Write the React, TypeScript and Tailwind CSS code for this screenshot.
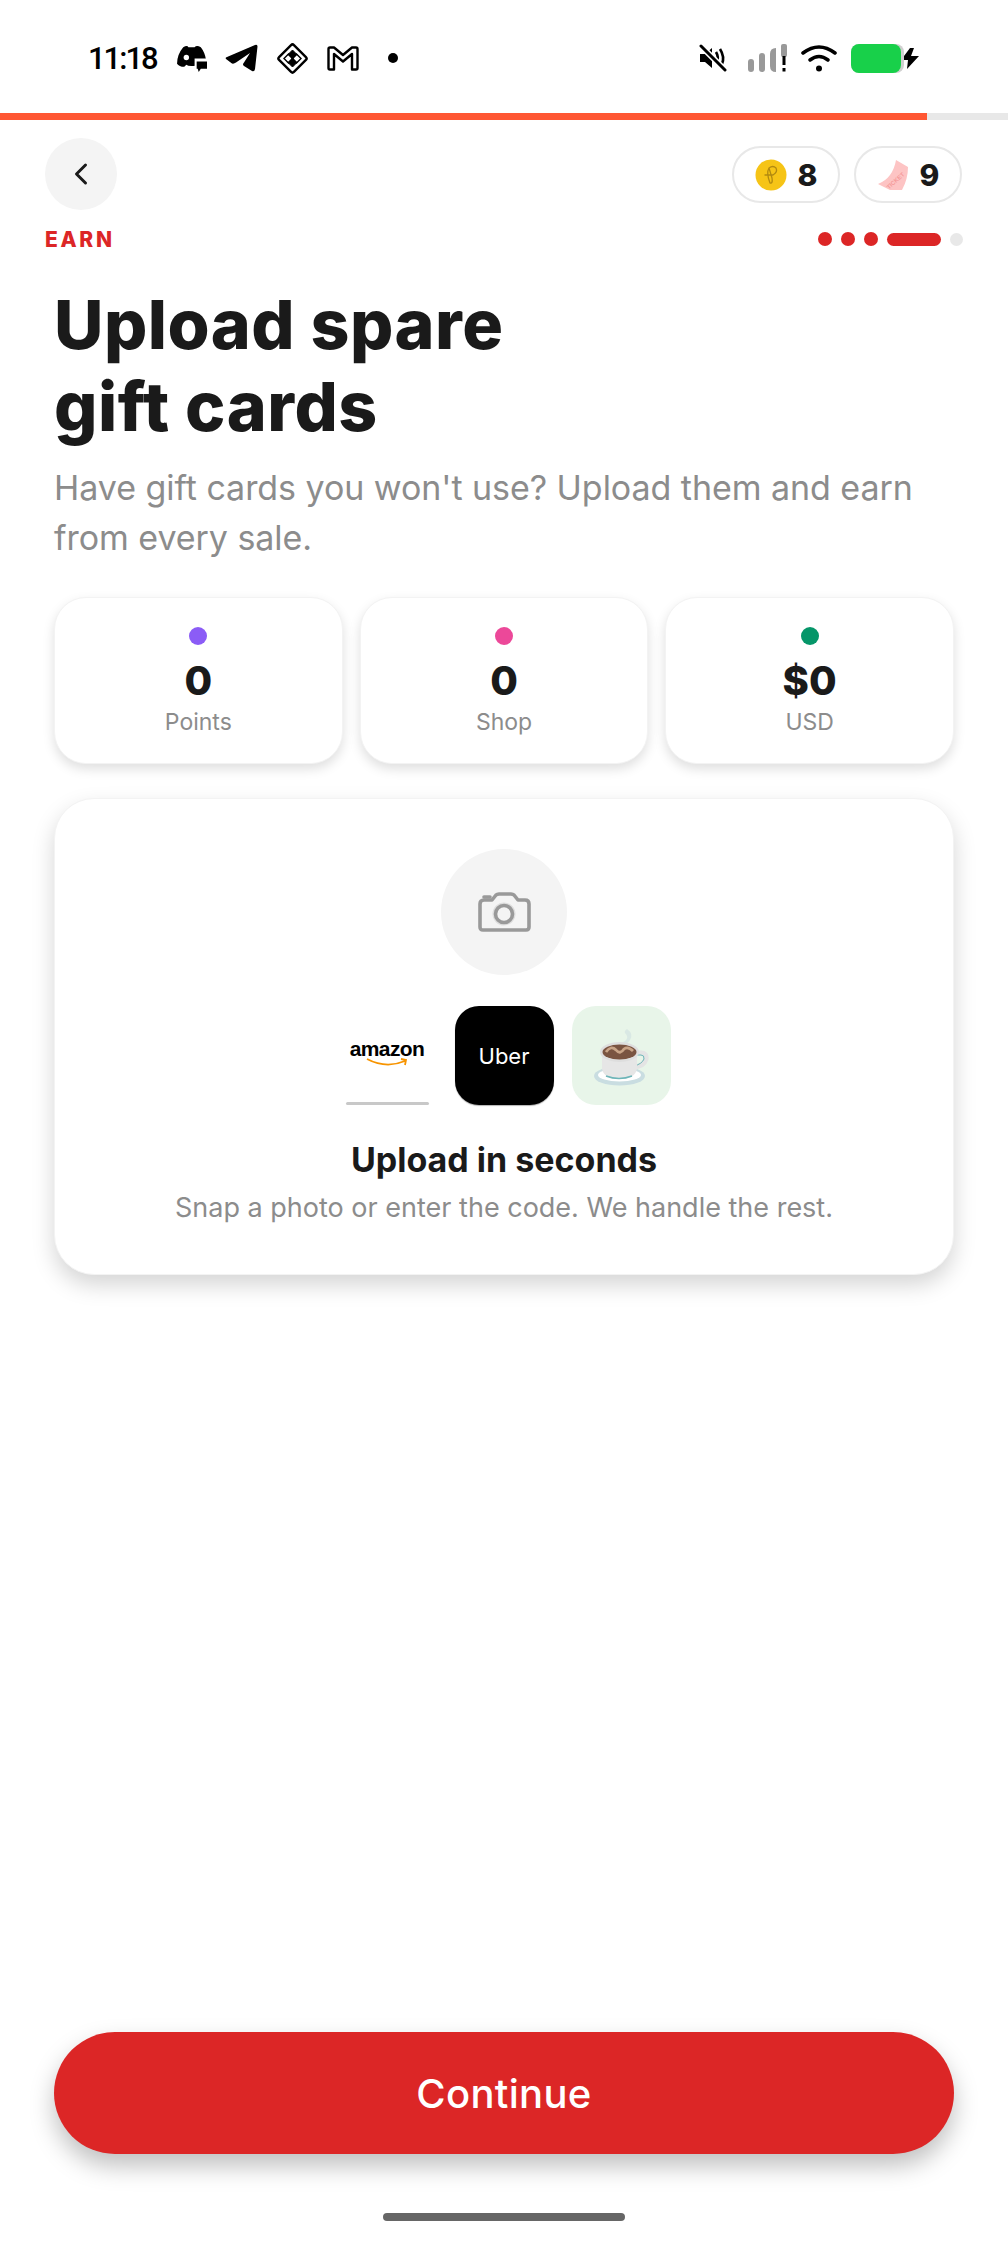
import { ChevronLeft } from 'lucide-react'

function DiscordIcon() {
  return (
    <svg width="31" height="27" viewBox="0 0 30 26" fill="#000">
      <path d="M7 2 Q11 0 12 2 L18 2 Q20 0 24 2 Q28 7 29 14 L19 14 L19 20 Q12 21 10 19 L8 21 Q3 21 1 18 Q1 9 7 2 Z" />
      <circle cx="10" cy="12" r="2.6" fill="#fff" />
      <path d="M19 16 H30 V23 H24 L22 26 L21 23 H19 Z" />
      <path d="M18 13 H30 V15 H20 V24 H18 Z" fill="#fff" />
    </svg>
  )
}

function TelegramIcon() {
  return (
    <svg width="33" height="28" viewBox="0 0 33 28" fill="#000">
      <path d="M1 15 Q0 13.5 2 13 L30 1 Q32.5 0 32.5 2.5 L30 25 Q29.5 28 27 27 L19 22 Q17 20.5 19 18.5 L25 9 L11 18.5 Q9 20 7 19.5 Z" />
    </svg>
  )
}

function DiamondIcon() {
  return (
    <svg width="33" height="33" viewBox="0 0 33 33" fill="none" stroke="#000">
      <rect x="6" y="6" width="21" height="21" rx="2" transform="rotate(45 16.5 16.5)" strokeWidth="2.4" />
      <path d="M16.5 8 L21 12.5 L16.5 17 L12 12.5 Z M16.5 16 L21 20.5 L16.5 25 L12 20.5 Z" fill="#000" strokeWidth="1" />
      <path d="M8 16.5 L12.5 12 L17 16.5 L12.5 21 Z M16 16.5 L20.5 12 L25 16.5 L20.5 21 Z" strokeWidth="1.4" />
    </svg>
  )
}

function GmailIcon() {
  return (
    <svg width="32" height="25" viewBox="0 0 32 25" fill="none" stroke="#000" strokeWidth="2.4" strokeLinejoin="round">
      <path d="M1.5 3 Q1.5 1.5 3 1.5 H7 L16 9 L25 1.5 H29 Q30.5 1.5 30.5 3 V22 Q30.5 23.5 29 23.5 H25 V8 L16 15.5 L7 8 V23.5 H3 Q1.5 23.5 1.5 22 Z" />
    </svg>
  )
}

function MuteIcon() {
  return (
    <svg width="28" height="28" viewBox="0 0 28 28" fill="none">
      <path d="M1 10 H6 L13 4 V24 L6 18 H1 Z" fill="#000" />
      <path d="M17 8 Q20 13 18 18 M21 5 Q26 13 23 20" stroke="#000" strokeWidth="2.6" />
      <path d="M2 2 L26 26" stroke="#fff" strokeWidth="6" />
      <path d="M2 2 L26 26" stroke="#000" strokeWidth="3" strokeLinecap="round" />
    </svg>
  )
}

function SignalIcon() {
  return (
    <svg width="39" height="28" viewBox="0 0 39 28" fill="#999">
      <rect x="0" y="15" width="6" height="13" rx="3" />
      <rect x="11" y="9" width="6" height="19" rx="3" />
      <path d="M28 4 V28 Q22 28 22 22 V10 Q22 4 28 4 Z" />
      <rect x="33" y="0" width="6" height="13" rx="2" />
      <rect x="34.5" y="12" width="3" height="9" fill="#000" />
      <rect x="34.5" y="24" width="3" height="3.5" fill="#000" />
    </svg>
  )
}

function WifiIcon() {
  return (
    <svg width="36" height="28" viewBox="0 0 36 28" fill="none" stroke="#000" strokeWidth="3.6" strokeLinecap="round">
      <path d="M2 9 Q18 -3 34 9" />
      <path d="M9 16 Q18 9 27 16" />
      <circle cx="18" cy="24.5" r="3" fill="#000" stroke="none" />
    </svg>
  )
}

function BoltIcon() {
  return (
    <svg width="19" height="21" viewBox="0 0 19 21" fill="#000">
      <path d="M9 0 L0 12 H7 L6 21 L18 8 H10 L13 0 Z" />
    </svg>
  )
}

function CoinIcon() {
  return (
    <svg width="32" height="32" viewBox="0 0 32 32" fill="none">
      <circle cx="16" cy="16" r="15.5" fill="#f6c416" />
      <path d="M15 24 Q11 14 14 9 Q18 6 21 9 Q23 13 18 16 L10 16 M15 24 Q18 25 17 19 L14 9" stroke="#b28a10" strokeWidth="1.3" strokeLinecap="round" />
    </svg>
  )
}

function TicketIcon() {
  return (
    <svg width="32" height="32" viewBox="0 0 32 32">
      <path d="M19 1 L31 8 Q31 20 25 31 L13 31 L1 25 Q16 19 19 1 Z" fill="#fdc4c4" />
      <text x="9" y="27" fontSize="6" fontFamily="'Liberation Sans', sans-serif" fontWeight="700" fill="#f59a9a" transform="rotate(-42 15 25)">TICKET</text>
    </svg>
  )
}

function CoffeeIcon() {
  return (
    <svg width="55" height="57" viewBox="0 0 55 57" fill="none">
      <path d="M27 14 Q37 10 31 4 Q30 2 33 0 Q40 5 36 11 Q33 16 27 17 Z" fill="#d9e8e4" />
      <ellipse cx="25.5" cy="47" rx="25.5" ry="9.5" fill="#c9dde1" />
      <ellipse cx="25.5" cy="46" rx="21.5" ry="6.5" fill="#ffffff" />
      <path d="M42 24 H47 Q53 24 52 30 Q50 37 40 38" stroke="#e4e4e4" strokeWidth="5" />
      <path d="M42 26 H47 Q50.5 26 50 30 Q48 35 40 37" stroke="#6db5b8" strokeWidth="1" />
      <path d="M8 23 H43 V40 Q41 50 25.5 50 Q10 50 8 40 Z" fill="#e6e6e6" />
      <path d="M12 47 Q25 52 38 47" stroke="#6db5b8" strokeWidth="1.4" />
      <ellipse cx="25.5" cy="23" rx="19.5" ry="10" fill="#dedede" />
      <ellipse cx="25.5" cy="23" rx="17" ry="7.5" fill="#7a5441" />
      <path d="M12 23 Q17 16 22 21 Q26 26 30 20 Q34 17 39 22" stroke="#c9a487" strokeWidth="2.8" />
    </svg>
  )
}

function CameraIcon() {
  return (
    <svg width="53" height="40" viewBox="0 0 53 40" fill="none" stroke="#999" strokeWidth="3.6" strokeLinejoin="round">
      <path d="M2 12 Q2 8 6 8 H14 L18 3 Q19 2 21 2 H33 Q35 2 36 3 L40 8 H47 Q51 8 51 12 V35 Q51 38 48 38 H5 Q2 38 2 35 Z" />
      <path d="M6 5 H12" strokeLinecap="round" />
      <circle cx="26" cy="22" r="10.5" stroke="#dedede" strokeWidth="2" />
      <circle cx="26" cy="22" r="8.5" />
    </svg>
  )
}

function StatCard({ dot, value, label }: { dot: string; value: string; label: string }) {
  return (
    <div className="flex h-[167px] flex-col items-center rounded-[32px] border border-[#f3f3f3] bg-white pt-[29px] shadow-[0_5px_12px_rgba(0,0,0,0.13)]">
      <div className={`h-[18px] w-[18px] rounded-full ${dot}`} />
      <div className="mt-[11px] text-[40px] leading-[50px] font-extrabold text-[#1a1a1a]">{value}</div>
      <div className="mt-[2px] text-[23px] leading-[28px] text-[#8c8c8c]">{label}</div>
    </div>
  )
}

export default function App() {
  return (
    <div className="flex h-[2244px] w-[1008px] flex-col overflow-hidden bg-white font-['Inter',sans-serif]">
      {/* status bar */}
      <div className="flex h-[113px] items-start justify-between pt-[41px] pr-[88px] pl-[88px]">
        <div className="flex h-[34px] items-center">
          <span className="font-['Roboto',sans-serif] text-[31px] leading-none font-medium tracking-[-2px] text-black">11:18</span>
          <div className="ml-[19px] flex items-center gap-[18px]">
            <DiscordIcon />
            <TelegramIcon />
            <DiamondIcon />
            <GmailIcon />
            <div className="ml-[11px] h-[10px] w-[10px] rounded-full bg-black" />
          </div>
        </div>
        <div className="flex h-[34px] items-center">
          <MuteIcon />
          <div className="ml-[21px]"><SignalIcon /></div>
          <div className="ml-[14px]"><WifiIcon /></div>
          <div className="relative ml-[14px] h-[29px] w-[53px] rounded-[8px] bg-[#d0d0d0]">
            <div className="h-[29px] w-[50px] rounded-[8px] bg-[#18d04a]" />
          </div>
          <div className="-ml-[3px]"><BoltIcon /></div>
        </div>
      </div>

      {/* progress */}
      <div className="h-[7px] w-full bg-[#e8e8e8]">
        <div className="h-[7px] w-[927px] bg-[#ff5733]" />
      </div>

      {/* header */}
      <div className="mt-[18px] flex items-start justify-between pr-[46px] pl-[45px]">
        <div className="flex h-[72px] w-[72px] items-center justify-center rounded-full bg-[#f4f4f4]">
          <ChevronLeft className="h-[36px] w-[36px] text-[#1a1a1a]" strokeWidth={2} />
        </div>
        <div className="mt-[8px] flex gap-[14px]">
          <div className="flex h-[57px] w-[108px] items-center justify-center gap-[11px] rounded-full border-2 border-[#e8e8e8]">
            <CoinIcon />
            <span className="text-[30px] leading-none font-extrabold text-[#1a1a1a]">8</span>
          </div>
          <div className="flex h-[57px] w-[108px] items-center justify-center gap-[11px] rounded-full border-2 border-[#e8e8e8]">
            <TicketIcon />
            <span className="text-[30px] leading-none font-extrabold text-[#1a1a1a]">9</span>
          </div>
        </div>
      </div>

      {/* section row */}
      <div className="mt-[19px] flex h-[20px] items-center justify-between pr-[45px] pl-[45px]">
        <span className="text-[21px] leading-none font-extrabold tracking-[2.7px] text-[#dc2626]">EARN</span>
        <div className="flex items-center gap-[9px]">
          <div className="h-[14px] w-[14px] rounded-full bg-[#dc2626]" />
          <div className="h-[14px] w-[14px] rounded-full bg-[#dc2626]" />
          <div className="h-[14px] w-[14px] rounded-full bg-[#dc2626]" />
          <div className="h-[13px] w-[54px] rounded-full bg-[#dc2626]" />
          <div className="h-[13px] w-[13px] rounded-full bg-[#e8e8e8]" />
        </div>
      </div>

      {/* content */}
      <div className="flex flex-1 flex-col px-[54px]">
        <h1 className="mt-[34px] text-[68px] leading-[82px] font-extrabold tracking-[0.5px] text-[#1a1a1a]">
          Upload spare
          <br />
          gift cards
        </h1>
        <p className="mt-[16px] text-[34px] leading-[50px] tracking-[-0.05px] text-[#8c8c8c]">
          Have gift cards you won't use? Upload them and earn from every sale.
        </p>

        <div className="mt-[34px] grid grid-cols-3 gap-[17px]">
          <StatCard dot="bg-[#8b5cf6]" value="0" label="Points" />
          <StatCard dot="bg-[#ec4899]" value="0" label="Shop" />
          <StatCard dot="bg-[#059669]" value="$0" label="USD" />
        </div>

        <div className="mt-[34px] flex h-[477px] flex-col items-center rounded-[40px] border border-[#f3f3f3] bg-white pt-[50px] shadow-[0_10px_22px_rgba(0,0,0,0.17)]">
          <div className="flex h-[126px] w-[126px] items-center justify-center rounded-full bg-[#f4f4f4]">
            <CameraIcon />
          </div>
          <div className="mt-[31px] flex gap-[18px]">
            <div className="flex h-[99px] w-[99px] flex-col items-center bg-white pt-[34px]">
              <span className="font-['Liberation_Sans',sans-serif] text-[21px] leading-[18px] font-bold tracking-[-0.6px] text-black">amazon</span>
              <svg width="42" height="9" viewBox="0 0 42 9" fill="none" stroke="#f79400" strokeWidth="1.8">
                <path d="M1 1 Q20 11 39 3 M35 1 L40 2 L39 7" />
              </svg>
              <div className="mt-auto h-[3px] w-[83px] rounded-full bg-[#c8c8c8]" />
            </div>
            <div className="flex h-[99px] w-[99px] items-center justify-center rounded-[24px] bg-black shadow-[0_1px_1px_rgba(0,0,0,0.3)]">
              <span className="font-['Inter',sans-serif] text-[22px] leading-none font-normal text-white">Uber</span>
            </div>
            <div className="flex h-[99px] w-[99px] items-center justify-center rounded-[24px] bg-[#e8f5e9] pt-[4px]">
              <CoffeeIcon />
            </div>
          </div>
          <h2 className="mt-[35px] text-[34px] leading-[40px] font-bold text-[#1a1a1a]">Upload in seconds</h2>
          <p className="mt-[12px] text-[27px] leading-[32px] text-[#8c8c8c]">Snap a photo or enter the code. We handle the rest.</p>
        </div>

        <div className="flex-1" />

        <button className="h-[122px] w-full rounded-full bg-[#dc2626] pt-[2px] text-[40px] font-medium tracking-[0.3px] text-white shadow-[0_12px_24px_rgba(0,0,0,0.25)]">
          Continue
        </button>
        <div className="mx-auto mt-[59px] mb-[23px] h-[8px] w-[242px] rounded-full bg-[#666666]" />
      </div>
    </div>
  )
}
